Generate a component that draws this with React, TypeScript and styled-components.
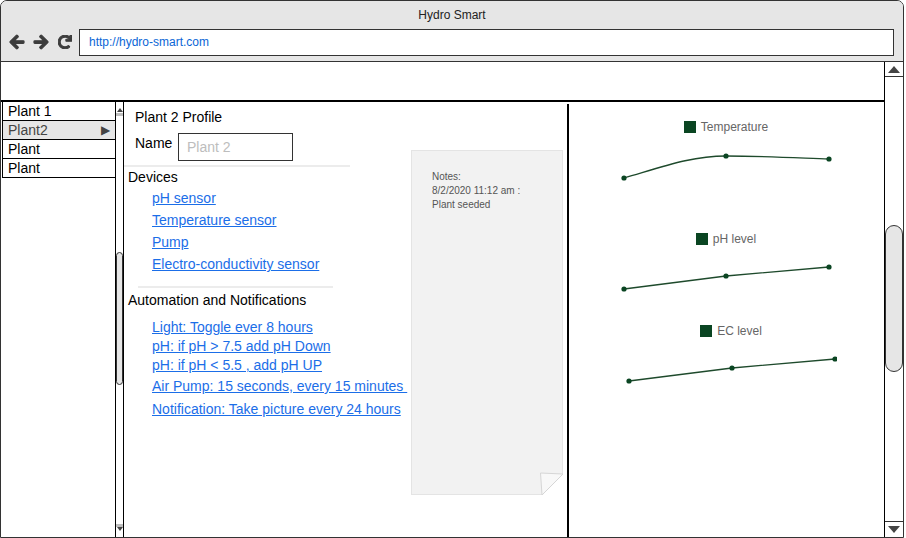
import React from "react";
import styled, { createGlobalStyle } from "styled-components";
import { FaArrowLeft, FaArrowRight, FaRedo } from "react-icons/fa";

const Global = createGlobalStyle`
  html, body { margin: 0; padding: 0; background: #fff; }
  body { font-family: "Liberation Sans", Arial, sans-serif; }
  * { box-sizing: border-box; }
`;

const Window = styled.div`
  width: 904px;
  height: 538px;
  border: 1px solid #333;
  border-radius: 7px 7px 0 0;
  overflow: hidden;
  display: flex;
  flex-direction: column;
  background: #fff;
`;

const TitleBar = styled.div`
  height: 61px;
  flex: none;
  background: #e6e6e6;
  border-bottom: 1px solid #333;
  display: flex;
  flex-direction: column;
`;

const Title = styled.div`
  height: 28px;
  line-height: 28px;
  text-align: center;
  font-size: 12px;
  color: #222;
`;

const Toolbar = styled.div`
  height: 26px;
  display: flex;
  align-items: center;
  padding: 0 9px 0 8px;
`;

const NavIcon = styled.span<{ $w: number }>`
  width: ${(p) => p.$w}px;
  margin-right: 8px;
  display: flex;
  align-items: center;
  justify-content: center;
  color: #3d3d3d;
  svg path {
    stroke: currentColor;
    stroke-width: 40;
    stroke-linejoin: round;
  }
`;

const UrlBox = styled.div`
  flex: 1;
  height: 27px;
  margin-left: -1px;
  background: #fff;
  border: 1px solid #333;
  display: flex;
  align-items: center;
  padding-left: 9px;
  font-size: 12px;
  color: #0a66d6;
`;

const ContentRow = styled.div`
  flex: 1;
  display: flex;
  min-height: 0;
`;

const Page = styled.div`
  flex: 1;
  display: flex;
  flex-direction: column;
  min-width: 0;
`;

const TopBlank = styled.div`
  height: 40px;
  flex: none;
  border-bottom: 2px solid #000;
`;

const Main = styled.div`
  flex: 1;
  display: flex;
  min-height: 0;
`;

const ListCol = styled.div`
  width: 114px;
  padding-left: 1px;
  flex: none;
`;

const ListItem = styled.div<{ $selected?: boolean }>`
  height: 19px;
  border-left: 1px solid #000;
  border-bottom: 1px solid #000;
  background: ${(p) => (p.$selected ? "#e6e6e6" : "#fff")};
  color: ${(p) => (p.$selected ? "#444" : "#000")};
  font-size: 14px;
  line-height: 18px;
  padding: 0 5px 0 5px;
  display: flex;
  align-items: center;
  justify-content: space-between;
`;

const ItemArrow = styled.span`
  font-size: 12px;
  color: #444;
`;

const VScroll = styled.div<{ $w: number; $left?: boolean }>`
  width: ${(p) => p.$w}px;
  flex: none;
  border-left: 1px solid #000;
  border-right: ${(p) => (p.$left ? "1px solid #000" : "none")};
  display: flex;
  flex-direction: column;
`;

const ScrollBtn = styled.div<{ $h: number; $down?: boolean; $line?: boolean }>`
  height: ${(p) => p.$h}px;
  flex: none;
  display: flex;
  align-items: center;
  justify-content: center;
  border-top: ${(p) => (p.$down && p.$line ? "1px solid #333" : "none")};
  border-bottom: ${(p) => (!p.$down && p.$line ? "1px solid #333" : "none")};
`;

const SmallBtn = styled.div<{ $down?: boolean }>`
  height: 14px;
  flex: none;
  display: flex;
  flex-direction: ${(p) => (p.$down ? "column-reverse" : "column")};
  align-items: center;
  justify-content: flex-end;
`;

const Band = styled.div`
  width: 100%;
  height: 3px;
  background: #bfbfbf;
  margin-top: 1px;
`;

const Tri = styled.span<{ $size: number; $down?: boolean }>`
  width: 0;
  height: 0;
  border-left: ${(p) => p.$size}px solid transparent;
  border-right: ${(p) => p.$size}px solid transparent;
  ${(p) =>
    p.$down
      ? `border-top: ${Math.round(p.$size * 1.2)}px solid #444;`
      : `border-bottom: ${Math.round(p.$size * 1.2)}px solid #444;`}
`;

const Track = styled.div`
  flex: 1;
`;

const Thumb = styled.div<{ $top: number; $h: number; $r: number }>`
  margin-top: ${(p) => p.$top}px;
  height: ${(p) => p.$h}px;
  background: #e6e6e6;
  border: 1px solid #333;
  border-radius: ${(p) => p.$r}px;
`;

const ContentCol = styled.div`
  width: 443px;
  flex: none;
  display: flex;
`;

const FormCol = styled.div`
  width: 287px;
  flex: none;
  display: flex;
  flex-direction: column;
`;

const Heading = styled.div<{ $mt: number; $pl: number }>`
  margin-top: ${(p) => p.$mt}px;
  padding-left: ${(p) => p.$pl}px;
  font-size: 14px;
  line-height: 16px;
  color: #000;
`;

const NameRow = styled.div`
  margin-top: 8px;
  padding-left: 11px;
  display: flex;
  align-items: center;
  gap: 5px;
  font-size: 14px;
`;

const NameLabel = styled.span`
  width: 38px;
  margin-top: -8px;
`;

const NameInput = styled.div`
  width: 115px;
  height: 28px;
  border: 1px solid #333;
  padding: 4px 0 0 8px;
  font-size: 14px;
  line-height: 18px;
  color: #bdbdbd;
`;

const Separator = styled.div<{ $mt: number; $ml: number; $w: number }>`
  margin-top: ${(p) => p.$mt}px;
  margin-left: ${(p) => p.$ml}px;
  width: ${(p) => p.$w}px;
  height: 2px;
  background: #ececec;
`;

const LinkList = styled.div<{ $mt: number }>`
  margin-top: ${(p) => p.$mt}px;
  padding-left: 28px;
  display: flex;
  flex-direction: column;
`;

const Link = styled.a<{ $lh: number }>`
  font-size: 14px;
  line-height: ${(p) => p.$lh}px;
  color: #1b6ee8;
  text-decoration: underline;
  white-space: pre;
`;

const NoteCol = styled.div`
  width: 152px;
  margin: 48px 0 0 0;
  height: 345px;
  position: relative;
`;

const Note = styled.div`
  height: 100%;
  background: #f2f2f2;
  border: 1px solid #e4e4e4;
  padding: 19px 0 0 20px;
  font-size: 10px;
  line-height: 14px;
  color: #555;
`;

const Fold = styled.svg`
  position: absolute;
  right: -1px;
  bottom: -1px;
`;

const Divider = styled.div`
  width: 2px;
  flex: none;
  margin-top: 2px;
  background: #000;
`;

const RightPanel = styled.div`
  flex: 1;
  display: flex;
  flex-direction: column;
  padding-top: 18px;
`;

const ChartBlock = styled.div<{ $ml: number; $mt: number }>`
  margin-left: ${(p) => p.$ml}px;
  margin-top: ${(p) => p.$mt}px;
  width: 212px;
  display: flex;
  flex-direction: column;
  align-items: center;
`;

const Legend = styled.div`
  height: 14px;
  display: flex;
  align-items: center;
  gap: 5px;
  font-size: 12px;
  color: #666;
`;

const Swatch = styled.span`
  width: 12px;
  height: 12px;
  background: #0a4522;
`;

type Pt = [number, number];

const Chart: React.FC<{ label: string; ml: number; mt: number; h: number; path: string; pts: Pt[] }> = ({
  label,
  ml,
  mt,
  h,
  path,
  pts,
}) => (
  <ChartBlock $ml={ml} $mt={mt}>
    <Legend>
      <Swatch />
      <span>{label}</span>
    </Legend>
    <svg width={212} height={h} viewBox={`0 0 212 ${h}`}>
      <path d={path} fill="none" stroke="#1e4a2c" strokeWidth={1.3} />
      {pts.map(([x, y], i) => (
        <circle key={i} cx={x} cy={y} r={2.6} fill="#0a4522" />
      ))}
    </svg>
  </ChartBlock>
);

const plants = [
  { name: "Plant 1" },
  { name: "Plant2", selected: true },
  { name: "Plant" },
  { name: "Plant" },
];

export default function App() {
  return (
    <>
      <Global />
      <Window>
        <TitleBar>
          <Title>Hydro Smart</Title>
          <Toolbar>
            <NavIcon $w={16}>
              <FaArrowLeft size={16} />
            </NavIcon>
            <NavIcon $w={16}>
              <FaArrowRight size={16} />
            </NavIcon>
            <NavIcon $w={15}>
              <FaRedo size={14} />
            </NavIcon>
            <UrlBox>http://hydro-smart.com</UrlBox>
          </Toolbar>
        </TitleBar>
        <ContentRow>
          <Page>
            <TopBlank />
            <Main>
              <ListCol>
                {plants.map((p, i) => (
                  <ListItem key={i} $selected={p.selected}>
                    <span>{p.name}</span>
                    {p.selected && <ItemArrow>▶</ItemArrow>}
                  </ListItem>
                ))}
              </ListCol>
              <VScroll $w={9} $left>
                <SmallBtn>
                  <Tri $size={3} />
                  <Band />
                </SmallBtn>
                <Track>
                  <Thumb $top={136} $h={133} $r={4} />
                </Track>
                <SmallBtn $down>
                  <Tri $size={3} $down />
                  <Band />
                </SmallBtn>
              </VScroll>
              <ContentCol>
                <FormCol>
                  <Heading $mt={7} $pl={11}>Plant 2 Profile</Heading>
                  <NameRow>
                    <NameLabel>Name</NameLabel>
                    <NameInput>Plant 2</NameInput>
                  </NameRow>
                  <Separator $mt={4} $ml={0} $w={226} />
                  <Heading $mt={2} $pl={4}>Devices</Heading>
                  <LinkList $mt={2}>
                    <Link href="#" $lh={22}>pH sensor</Link>
                    <Link href="#" $lh={22}>Temperature sensor</Link>
                    <Link href="#" $lh={22}>Pump</Link>
                    <Link href="#" $lh={22}>Electro-conductivity sensor</Link>
                  </LinkList>
                  <Separator $mt={11} $ml={14} $w={195} />
                  <Heading $mt={4} $pl={4}>Automation and Notifications</Heading>
                  <LinkList $mt={10}>
                    <Link href="#" $lh={19}>Light: Toggle ever 8 hours</Link>
                    <Link href="#" $lh={19}>pH: if pH &gt; 7.5 add pH Down</Link>
                    <Link href="#" $lh={19}>pH: if pH &lt; 5.5 , add pH UP</Link>
                    <Link href="#" $lh={23}>Air Pump: 15 seconds, every 15 minutes </Link>
                    <Link href="#" $lh={22}>Notification: Take picture every 24 hours</Link>
                  </LinkList>
                </FormCol>
                <NoteCol>
                  <Note>
                    <div>Notes:</div>
                    <div>8/2/2020 11:12 am :</div>
                    <div>Plant seeded</div>
                  </Note>
                  <Fold width={25} height={25} viewBox="0 0 25 25">
                    <polygon points="24.5,3 25,3 25,25 3,25 3,24.5" fill="#fff" />
                    <polygon points="1.5,2 24,3 3,24" fill="#f8f8f8" stroke="#d6d6d6" strokeWidth={1} />
                  </Fold>
                </NoteCol>
              </ContentCol>
              <Divider />
              <RightPanel>
                <Chart
                  label="Temperature"
                  ml={51}
                  mt={0}
                  h={90}
                  path="M4,44 C45,32 72,22 106,22 C145,22 180,24 209,25"
                  pts={[
                    [4, 44],
                    [106, 22],
                    [209, 25],
                  ]}
                />
                <Chart
                  label="pH level"
                  ml={51}
                  mt={8}
                  h={78}
                  path="M4,43 L106,30 L209,21"
                  pts={[
                    [4, 43],
                    [106, 30],
                    [209, 21],
                  ]}
                />
                <Chart
                  label="EC level"
                  ml={56}
                  mt={0}
                  h={78}
                  path="M4,43 L107,30 L210,21"
                  pts={[
                    [4, 43],
                    [107, 30],
                    [210, 21],
                  ]}
                />
              </RightPanel>
            </Main>
          </Page>
          <VScroll $w={19}>
            <ScrollBtn $h={15} $line>
              <Tri $size={6} />
            </ScrollBtn>
            <Track>
              <Thumb $top={148} $h={147} $r={9} />
            </Track>
            <ScrollBtn $h={16} $down $line>
              <Tri $size={6} $down />
            </ScrollBtn>
          </VScroll>
        </ContentRow>
      </Window>
    </>
  );
}
